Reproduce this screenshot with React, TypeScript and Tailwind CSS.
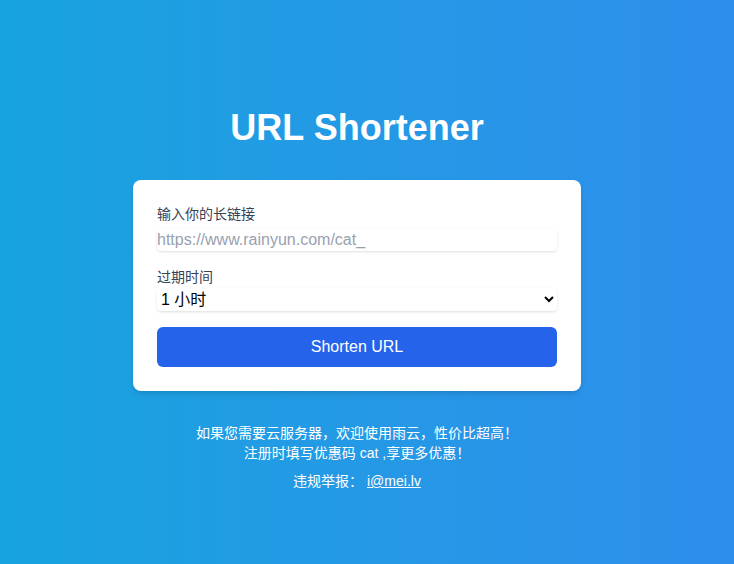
import React, { useState } from "react";

export default function App() {
  const [url, setUrl] = useState("");
  const [expire, setExpire] = useState("1h");

  return (
    <div className="min-h-screen w-full bg-gradient-to-r from-[#17a3df] to-[#2e8eeb] font-['Liberation_Sans','Noto_Sans_CJK_SC',sans-serif]">
      <div className="flex flex-col items-center pt-[108px] pr-5">
        <h1 className="text-4xl font-bold text-white mb-8">URL Shortener</h1>

        <div className="w-[448px] bg-white rounded-lg shadow-md p-6">
          <div className="mb-4">
            <label className="block text-sm text-gray-700 mb-1">输入你的长链接</label>
            <input
              type="text"
              value={url}
              onChange={(e) => setUrl(e.target.value)}
              placeholder="https://www.rainyun.com/cat_"
              className="block w-full h-[23px] text-base rounded shadow-sm outline-none placeholder:text-gray-400"
            />
          </div>
          <div className="mb-4">
            <label className="block text-sm text-gray-700 mb-px">过期时间</label>
            <select
              value={expire}
              onChange={(e) => setExpire(e.target.value)}
              className="block w-full h-[23px] text-base text-black rounded shadow-sm outline-none"
            >
              <option value="1h">1 小时</option>
              <option value="1d">1 天</option>
              <option value="7d">7 天</option>
              <option value="never">永久</option>
            </select>
          </div>
          <button className="block w-full bg-[#2563eb] text-white text-base py-2 rounded-md">Shorten URL</button>
        </div>

        <div className="mt-8 text-center text-sm text-white">
          <p>如果您需要云服务器，欢迎使用雨云，性价比超高！</p>
          <p>注册时填写优惠码 cat ,享更多优惠！</p>
          <p className="mt-2">
            违规举报： <a href="#" className="underline">i@mei.lv</a>
          </p>
        </div>
      </div>
    </div>
  );
}
